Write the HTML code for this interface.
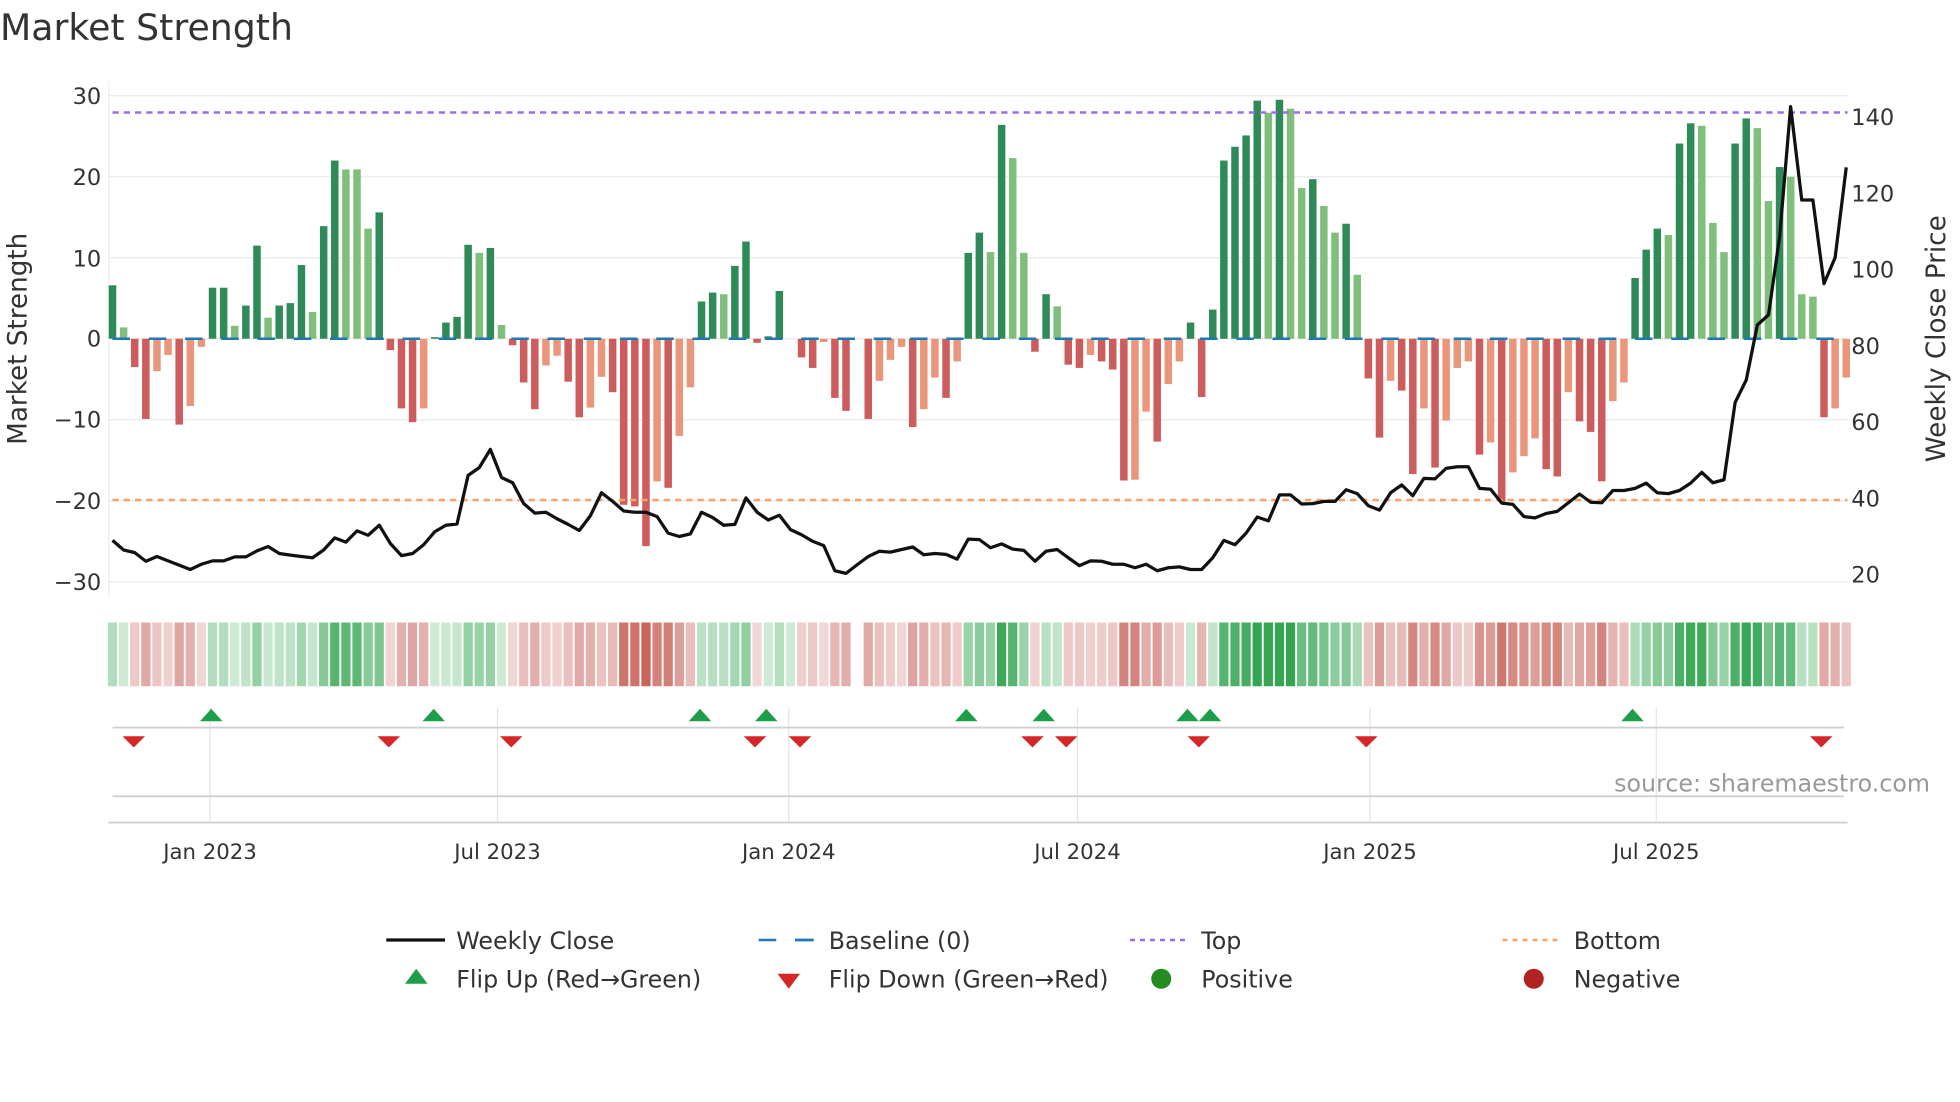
<!DOCTYPE html>
<html><head><meta charset="utf-8"><style>
html,body{margin:0;padding:0;background:#fff;}
svg{display:block;font-family:"DejaVu Sans","Liberation Sans",sans-serif;}
</style></head><body>
<svg id="s" width="1960" height="1102" viewBox="0 0 1568 881.6" xmlns="http://www.w3.org/2000/svg">
<rect width="1568" height="882" fill="#fff"/>
<text x="0" y="32" font-size="29" fill="#333">Market Strength</text>
<g id="grid" stroke="#ececec" stroke-width="1.2"></g>
<line x1="87" y1="65" x2="87" y2="478" stroke="#eee" stroke-width="1"/>
<g id="bars"></g>
<line x1="90" y1="271" x2="1478" y2="271" stroke="#1f77b4" stroke-width="2" stroke-dasharray="14,15"/>
<line x1="90" y1="90" x2="1478" y2="90" stroke="#9b6ee0" stroke-width="2" stroke-dasharray="5,4"/>
<line x1="90" y1="400" x2="1478" y2="400" stroke="#f4a46a" stroke-width="2" stroke-dasharray="5,4"/>
<polyline id="price" fill="none" stroke="#111" stroke-width="2.6" stroke-linejoin="round"/>
<g font-size="18" fill="#333" text-anchor="end">
<text x="81" y="83">30</text><text x="81" y="148">20</text><text x="81" y="213">10</text><text x="81" y="277">0</text><text x="81" y="342">−10</text><text x="81" y="407">−20</text><text x="81" y="472">−30</text>
</g>
<g font-size="18" fill="#333">
<text x="1481" y="100">140</text><text x="1481" y="161">120</text><text x="1481" y="222">100</text><text x="1481" y="283">80</text><text x="1481" y="344">60</text><text x="1481" y="405">40</text><text x="1481" y="466">20</text>
</g>
<text transform="translate(21,271) rotate(-90)" font-size="21" fill="#333" text-anchor="middle">Market Strength</text>
<text transform="translate(1556,271) rotate(-90)" font-size="21" fill="#333" text-anchor="middle">Weekly Close Price</text>
<g id="heat"></g>
<g stroke="#e4e4e4" stroke-width="1">
<line x1="168" y1="566" x2="168" y2="658"/><line x1="398" y1="566" x2="398" y2="658"/><line x1="631" y1="566" x2="631" y2="658"/><line x1="862" y1="566" x2="862" y2="658"/><line x1="1096" y1="566" x2="1096" y2="658"/><line x1="1325" y1="566" x2="1325" y2="658"/>
</g>
<line x1="90" y1="582" x2="1475" y2="582" stroke="#cfcfcf" stroke-width="1.5"/>
<line x1="90" y1="637" x2="1475" y2="637" stroke="#cfcfcf" stroke-width="1.5"/>
<line x1="87" y1="658" x2="1478" y2="658" stroke="#cfcfcf" stroke-width="1.5"/>
<g id="flips"></g>
<text x="1544" y="633" font-size="19" fill="#999" text-anchor="end">source: sharemaestro.com</text>
<g font-size="17" fill="#333" text-anchor="middle">
<text x="168" y="687">Jan 2023</text><text x="398" y="687">Jul 2023</text><text x="631" y="687">Jan 2024</text><text x="862" y="687">Jul 2024</text><text x="1096" y="687">Jan 2025</text><text x="1325" y="687">Jul 2025</text>
</g>
<g font-size="19" fill="#333">
<line x1="309" y1="752" x2="356" y2="752" stroke="#111" stroke-width="2.6"/>
<text x="365" y="759">Weekly Close</text>
<line x1="607" y1="752" x2="651" y2="752" stroke="#1f77b4" stroke-width="2" stroke-dasharray="14,15"/>
<line x1="636" y1="752" x2="651" y2="752" stroke="#1f77b4" stroke-width="2"/>
<text x="663" y="759">Baseline (0)</text>
<line x1="904" y1="752" x2="949" y2="752" stroke="#9b6ee0" stroke-width="2" stroke-dasharray="4,4"/>
<text x="961" y="759">Top</text>
<line x1="1202" y1="752" x2="1247" y2="752" stroke="#f4a46a" stroke-width="2" stroke-dasharray="4,4"/>
<text x="1259" y="759">Bottom</text>
<polygon points="324,787 342,787 333,775" fill="#1f9e4a"/>
<text x="365" y="790">Flip Up (Red→Green)</text>
<polygon points="622,779 640,779 631,791" fill="#d62728"/>
<text x="663" y="790">Flip Down (Green→Red)</text>
<circle cx="929" cy="783" r="8" fill="#228b22"/>
<text x="961" y="790">Positive</text>
<circle cx="1227" cy="783" r="8" fill="#b22222"/>
<text x="1259" y="790">Negative</text>
</g>
</svg>
<script>
(function(){
var NS="http://www.w3.org/2000/svg";
function el(t,a,p){var e=document.createElementNS(NS,t);for(var k in a)e.setAttribute(k,a[k]);p.appendChild(e);return e;}
var g=document.getElementById('grid');
[30,20,10,0,-10,-20,-30].forEach(function(v){var y=271-v*6.48;el('line',{x1:87,y1:y,x2:1478,y2:y},g);});
var d="G6.6,g1.4,R-3.5,R-9.9,r-4.0,r-2.0,R-10.6,r-8.3,r-1.0,G6.3,G6.3,g1.6,G4.1,G11.5,g2.6,G4.1,G4.4,G9.1,g3.3,G13.9,G22.0,g20.9,g20.9,g13.6,G15.6,R-1.4,R-8.6,R-10.3,r-8.6,G0.2,G2.0,G2.7,G11.6,g10.6,G11.2,g1.7,R-0.8,R-5.4,R-8.7,r-3.3,r-2.1,R-5.3,R-9.7,r-8.5,r-4.7,R-6.6,R-20.5,R-20.7,R-25.6,r-17.6,R-18.4,r-12.0,r-6.0,G4.6,G5.7,g5.5,G9.0,G12.0,R-0.5,G0.3,G5.9,N0,R-2.3,R-3.6,r-0.4,R-7.3,R-8.9,N0,R-9.9,r-5.2,r-2.6,r-1.0,R-10.9,r-8.7,r-4.8,R-7.3,r-2.8,G10.6,G13.1,g10.7,G26.4,g22.3,g10.6,R-1.6,G5.5,g4.0,R-3.2,R-3.6,r-2.0,R-2.8,R-3.8,R-17.5,r-17.4,r-9.0,R-12.7,r-5.6,r-2.8,G2.0,R-7.2,G3.6,G22.0,G23.7,G25.1,G29.4,g27.9,G29.5,g28.4,g18.6,G19.7,g16.4,g13.1,G14.2,g7.9,R-4.9,R-12.2,r-5.2,R-6.4,R-16.7,r-8.6,R-15.9,r-10.1,r-3.6,r-2.8,R-14.3,r-12.8,R-20.1,r-16.5,r-14.5,r-12.3,R-16.1,R-17.0,r-6.6,R-10.2,R-11.5,R-17.6,r-7.7,r-5.4,G7.5,G11.0,G13.6,g12.8,G24.1,G26.6,g26.3,g14.3,g10.7,G24.1,G27.2,g26.0,g17.0,G21.2,g20.0,g5.5,g5.2,R-9.7,r-8.6,r-4.8".split(',');
var col={G:'#2e8b57',g:'#7fbf7b',R:'#cd5c5c',r:'#e9967a'};
var b=document.getElementById('bars'),h=document.getElementById('heat');
var P=8.891;
function mix(a,c,t){t=Math.max(0,Math.min(1,t));var r=[];for(var i=0;i<3;i++)r.push(Math.round(a[i]+(c[i]-a[i])*t));return 'rgb('+r.join(',')+')';}
d.forEach(function(s,i){
 var t=s[0],v=parseFloat(s.slice(1)),x=90+P*i;
 if(t!=='N'&&Math.abs(v)>0.05){var y0=271,y1=271-v*6.48;el('rect',{x:x-3,y:Math.min(y0,y1),width:6,height:Math.abs(y1-y0),fill:col[t]},b);}
 if(i!==67){var c;
  if(t==='G'||t==='g'||t==='N')c=mix([214,238,220],[52,166,82],Math.max(v,1.5)/28);
  else c=mix([242,218,218],[200,100,88],(-v)/24);
  el('rect',{x:x-3.7,y:498,width:7.4,height:51,fill:c},h);}
});
var Z=[1050,1072,1078,1098,1087,1097,1107,1117,1105,1097,1097,1088,1088,1074,1064,1080,1084,1087,1090,1072,1044,1054,1028,1038,1015,1057,1085,1080,1060,1030,1015,1012,900,882,840,905,917,965,987,985,
1000,1013,1027,993,940,960,982,985,985,995,1033,1041,1035,985,997,1015,1013,952,985,1003,992,1025,1037,1052,1062,1120,1126,1106,1087,1075,1077,1071,1065,1083,1080,1082,1093,1047,1048,1067,
1058,1070,1073,1098,1075,1071,1090,1108,1097,1098,1105,1105,1113,1105,1120,1113,1111,1117,1117,1090,1050,1060,1033,996,1005,945,945,966,965,960,960,933,942,970,980,940,922,947,907,908,
884,880,880,930,932,964,967,995,998,988,983,963,943,962,963,935,935,930,918,940,942,935,918,893,917,910,732,680,553,530,350,50,265,265,458,398,190];
var pts=Z.map(function(z,i){return (90+P*i).toFixed(1)+','+(68+0.347*z).toFixed(1);}).join(' ');
document.getElementById('price').setAttribute('points',pts);
var f=document.getElementById('flips');
[169,347,560,613,773,835,950,968,1306].forEach(function(x){el('polygon',{points:(x-9)+',577 '+(x+9)+',577 '+x+',567',fill:'#1f9e4a'},f);});
[107,311,409,604,640,826,853,959,1093,1457].forEach(function(x){el('polygon',{points:(x-9)+',589 '+(x+9)+',589 '+x+',598',fill:'#d62728'},f);});
})();
</script>
</body></html>
